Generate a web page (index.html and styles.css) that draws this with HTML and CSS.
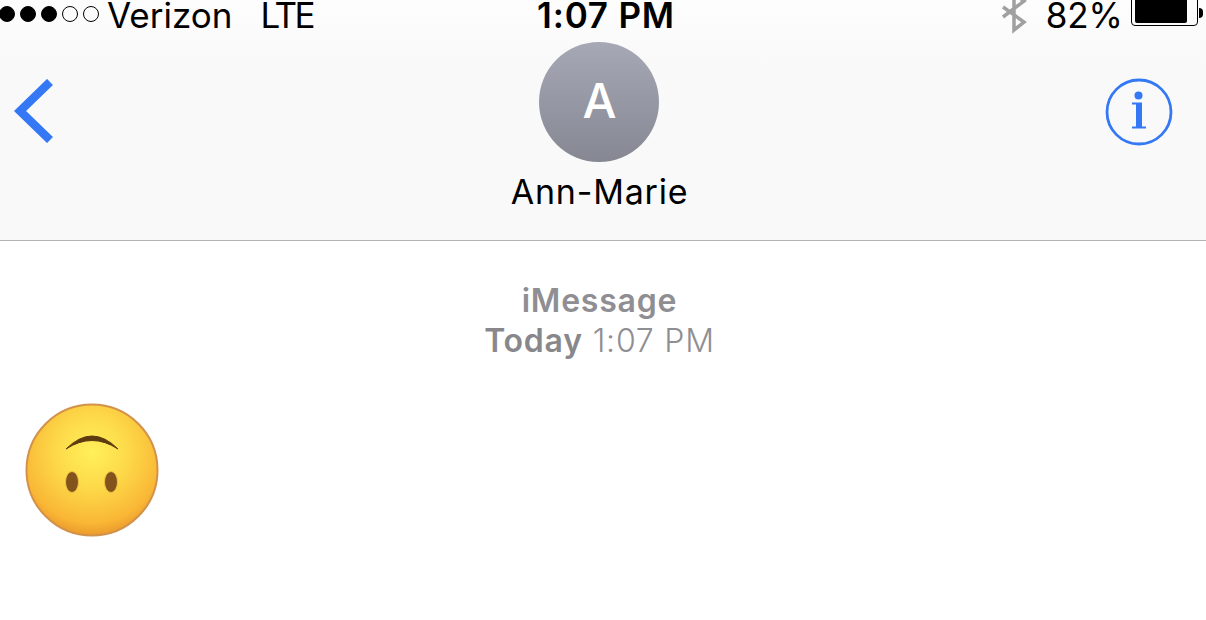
FILE: index.html
```html
<!DOCTYPE html>
<html lang="en">
<head>
  <meta charset="UTF-8">
  <meta name="viewport" content="width=device-width, initial-scale=1">
  <title>Ann-Marie</title>
  <link rel="stylesheet" href="styles.css">
</head>
<body>
  <header class="top">
    <div class="status">
      <div class="status-left">
        <span class="signal">
          <i class="dot on"></i><i class="dot on"></i><i class="dot on"></i><i class="dot"></i><i class="dot"></i>
        </span>
        <span class="carrier">Verizon</span>
        <span class="network">LTE</span>
      </div>
      <div class="clock">1:07 PM</div>
      <div class="status-right">
        <svg class="bluetooth" width="26" height="34" viewBox="0 0 26 34" fill="none" stroke="#a0a0a0" stroke-width="3.500">
          <path d="M2 7 L23 22 L13 30 L13 -6 L23 1 L2 17"/>
        </svg>
        <span class="percent">82%</span>
        <div class="battery">
          <div class="battery-case"><div class="battery-fill"></div></div>
          <div class="battery-tip"></div>
        </div>
      </div>
    </div>

    <nav class="nav">
      <svg class="back" width="40" height="64" viewBox="0 0 40 64" fill="none" stroke="#3478f6" stroke-width="8.500">
        <path d="M36 3 L6 32 L36 61"/>
      </svg>
      <div class="contact">
        <div class="avatar">A</div>
        <div class="name">Ann-Marie</div>
      </div>
      <svg class="info" width="68" height="68" viewBox="0 0 68 68">
        <circle cx="34" cy="34" r="32" fill="none" stroke="#3478f6" stroke-width="2.800"/>
        <circle cx="33.500" cy="17.500" r="4" fill="#3478f6"/>
        <path d="M27 24.500 H37 V48.500 H41 V50.500 H27 V48.500 H31 V26.500 H27 Z" fill="#3478f6"/>
      </svg>
    </nav>
  </header>

  <main class="thread">
    <div class="thread-head">
      <div class="service">iMessage</div>
      <div class="stamp"><b>Today</b> 1:07 PM</div>
    </div>

    <svg class="emoji" width="134" height="134" viewBox="0 0 134 134">
      <defs>
        <radialGradient id="face" cx="50%" cy="36%" r="64%">
          <stop offset="0" stop-color="#fff05a"/>
          <stop offset="0.45" stop-color="#fdd848"/>
          <stop offset="0.85" stop-color="#f9b735"/>
          <stop offset="1" stop-color="#ec9a2c"/>
        </radialGradient>
      </defs>
      <circle cx="67" cy="67" r="65.500" fill="url(#face)" stroke="#d2924a" stroke-width="2"/>
      <path d="M41 46 Q67 20 93 46 Q67 29 41 46 Z" fill="#5d3a10" stroke="#5d3a10" stroke-width="1"/>
      <ellipse cx="47" cy="79" rx="6.500" ry="10.500" fill="#82531a" stroke="#f0c043" stroke-width="1"/>
      <ellipse cx="86" cy="79" rx="6.500" ry="10.500" fill="#82531a" stroke="#f0c043" stroke-width="1"/>
    </svg>
  </main>
</body>
</html>
```

FILE: styles.css
```css
* {
  margin: 0;
  padding: 0;
  box-sizing: border-box;
}
html, body {
  height: 100%;
}
body {
  background: #fff;
  color: #000;
  font-family: Inter, 'Noto Sans', sans-serif;
  overflow: hidden;
}
.top {
  height: 241px;
  background: linear-gradient(#fdfdfd, #f9f9f9 60px);
  border-bottom: 1px solid #b4b4b4;
}

/* status bar, runs right up to the top edge */
.status {
  height: 34px;
  display: grid;
  grid-template-columns: 1fr auto 1fr;
  align-items: start;
  overflow: hidden;
  padding-left: 6px;
  font-size: 35px;
  line-height: 30px;
}
.status-left {
  display: flex;
  align-items: center;
  margin-left: -7px;
}
.signal {
  display: flex;
  gap: 5px;
  margin: -2px 8px 0 0;
}
.dot {
  width: 16px;
  height: 16px;
  border: 1px solid #000;
  border-radius: 50%;
}
.dot.on {
  background: #000;
}
.carrier {
  margin-right: 28px;
}
.network {
  letter-spacing: -2.500px;
}
.clock {
  font-weight: 600;
  letter-spacing: 0.800px;
}
.status-right {
  display: flex;
  align-items: flex-start;
  justify-content: flex-end;
  padding-right: 3px;
}
.bluetooth {
  margin-right: 19px;
}
.percent {
  margin-right: 8px;
}
.battery {
  display: flex;
  align-items: center;
  height: 26px;
}
.battery-case {
  width: 67px;
  height: 34px;
  margin-top: -8px;
  padding: 2px 10px 2px 3px;
  border: 1px solid #000;
  border-radius: 4px;
}
.battery-fill {
  height: 100%;
  background: #000;
  border-radius: 2px;
}
.battery-tip {
  width: 4px;
  height: 10px;
  margin-left: 1px;
  background: #000;
  border-radius: 0 5px 5px 0;
}

/* nav */
.nav {
  display: grid;
  grid-template-columns: 1fr auto 1fr;
  align-items: start;
  padding: 8px 21px 0 14px;
}
.back {
  margin-top: 37px;
}
.info {
  margin: 36px 12px 0 0;
  justify-self: end;
}
.contact {
  display: flex;
  flex-direction: column;
  align-items: center;
}
.avatar {
  width: 120px;
  height: 120px;
  border-radius: 50%;
  background: linear-gradient(#a6a9b5, #858893);
  color: #fff;
  font-size: 48px;
  font-weight: 500;
  line-height: 118px;
  text-align: center;
}
.name {
  margin-top: 8px;
  font-size: 34px;
  line-height: 44px;
  letter-spacing: 0.800px;
}

/* thread */
.thread {
  padding: 40px 0 0 25px;
}
.thread-head {
  margin-right: 32px;
  text-align: center;
  color: #8e8e93;
  font-size: 32px;
  line-height: 40px;
  letter-spacing: 0.800px;
}
.service, .stamp b {
  font-weight: 600;
}
.stamp {
  font-weight: 300;
}
.stamp b {
  color: #88888c;
}
.emoji {
  display: block;
  margin-top: 42px;
}
```
